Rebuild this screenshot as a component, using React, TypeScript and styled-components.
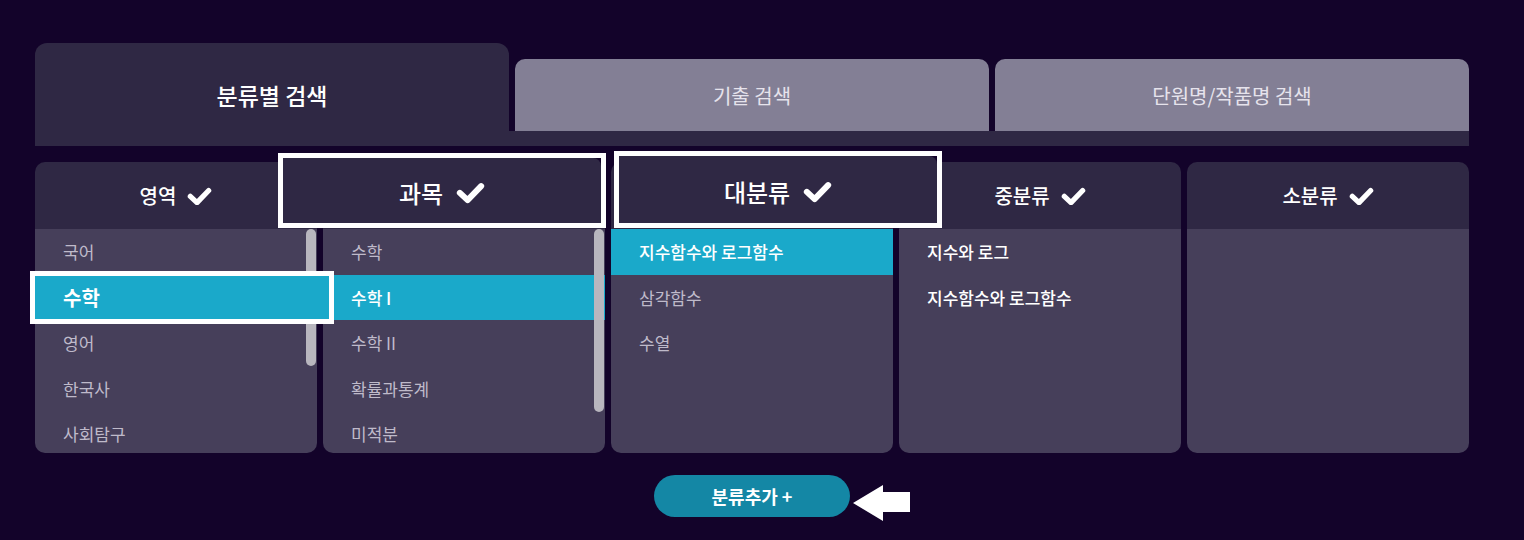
import styled, { createGlobalStyle } from "styled-components";

const colors = {
  bg: "#13032a",
  header: "#2f2844",
  list: "#463f5a",
  tabIdle: "#837f95",
  cyan: "#1aa9ca",
  button: "#1487a5",
  mute: "#bfbaca",
  white: "#ffffff",
};

interface ColumnData {
  title: string;
  items: string[];
  selected?: number;
  bright?: boolean;
  scroll?: { height: number };
}

const columns: ColumnData[] = [
  {
    title: "영역",
    items: ["국어", "수학", "영어", "한국사", "사회탐구"],
    scroll: { height: 137 },
  },
  {
    title: "과목",
    items: ["수학", "수학 I", "수학 II", "확률과통계", "미적분"],
    selected: 1,
    scroll: { height: 183 },
  },
  {
    title: "대분류",
    items: ["지수함수와 로그함수", "삼각함수", "수열"],
    selected: 0,
  },
  {
    title: "중분류",
    items: ["지수와 로그", "지수함수와 로그함수"],
    bright: true,
  },
  { title: "소분류", items: [] },
];

function Check({ size = 25 }: { size?: number }) {
  return (
    <CheckSvg width={size} height={size * 0.75} viewBox="0 0 24 18">
      <polyline
        points="3.2,9 9.6,15 20.8,3.4"
        fill="none"
        stroke="#fff"
        strokeWidth="5"
        strokeLinecap="round"
        strokeLinejoin="round"
      />
    </CheckSvg>
  );
}

export default function App() {
  return (
    <>
      <GlobalStyle />
      <Page>
        <TabRow>
          <Tab $active>분류별 검색</Tab>
          <Tab>기출 검색</Tab>
          <Tab>단원명/작품명 검색</Tab>
        </TabRow>

        <Board>
          {columns.map((col) => (
            <Column key={col.title}>
              <Header>
                <HeaderLabel>{col.title}</HeaderLabel>
                <Check />
              </Header>
              <List>
                {col.items.map((item, i) => (
                  <Row
                    key={item}
                    $selected={col.selected === i}
                    $bright={col.bright}
                  >
                    {item}
                  </Row>
                ))}
                {col.scroll && <ScrollThumb $height={col.scroll.height} />}
              </List>
            </Column>
          ))}

          <HeaderCallout $left={243} $top={-9} $height={75}>
            <CalloutInner>
              <CalloutLabel>과목</CalloutLabel>
              <Check size={29} />
            </CalloutInner>
          </HeaderCallout>
          <HeaderCallout $left={579} $top={-11} $height={77}>
            <CalloutInner>
              <CalloutLabel>대분류</CalloutLabel>
              <Check size={29} />
            </CalloutInner>
          </HeaderCallout>
          <RowCallout>수학</RowCallout>
        </Board>

        <Actions>
          <AddButton>
            분류추가 +
            <Pointer width="58" height="36" viewBox="0 0 58 36">
              <polygon points="0,18 30,0 30,7 57,7 57,27 30,27 30,36" fill="#fff" />
            </Pointer>
          </AddButton>
        </Actions>
      </Page>
    </>
  );
}

const GlobalStyle = createGlobalStyle`
  html, body {
    margin: 0;
    background: ${colors.bg};
    font-family: "Noto Sans CJK KR", "Noto Sans", sans-serif;
  }
`;

const Page = styled.div`
  width: 1434px;
  padding: 43px 35px 0;
  height: 497px;
`;

const TabRow = styled.div`
  display: flex;
  align-items: flex-end;
  gap: 6px;
  border-bottom: 15px solid ${colors.header};
`;

const Tab = styled.div<{ $active?: boolean }>`
  position: relative;
  z-index: 1;
  flex: 1;
  display: flex;
  align-items: center;
  justify-content: center;
  box-sizing: border-box;
  height: ${({ $active }) => ($active ? "103px" : "72px")};
  margin-bottom: ${({ $active }) => ($active ? "-15px" : "0")};
  border-radius: ${({ $active }) => ($active ? "12px 12px 0 0" : "10px 10px 0 0")};
  background: ${({ $active }) => ($active ? colors.header : colors.tabIdle)};
  color: ${({ $active }) => ($active ? colors.white : "#e6e3ec")};
  font-size: ${({ $active }) => ($active ? "23px" : "20px")};
  font-weight: ${({ $active }) => ($active ? 500 : 400)};
`;

const Board = styled.div`
  position: relative;
  margin-top: 16px;
  display: grid;
  grid-template-columns: repeat(5, 1fr);
  gap: 6px;
`;

const Column = styled.div`
  border-radius: 10px;
  overflow: hidden;
  display: flex;
  flex-direction: column;
`;

const Header = styled.div`
  height: 67px;
  background: ${colors.header};
  display: flex;
  align-items: center;
  justify-content: center;
  gap: 11px;
`;

const HeaderLabel = styled.span`
  color: ${colors.white};
  font-size: 20px;
  font-weight: 500;
`;

const CheckSvg = styled.svg`
  display: block;
  margin-top: 1px;
`;

const List = styled.div`
  position: relative;
  height: 224px;
  background: ${colors.list};
`;

const Row = styled.div<{ $selected?: boolean; $bright?: boolean }>`
  height: 45.5px;
  display: flex;
  align-items: center;
  padding-left: 28px;
  font-size: 17px;
  font-weight: ${({ $selected, $bright }) => ($selected || $bright ? 500 : 400)};
  color: ${({ $selected, $bright }) =>
    $selected || $bright ? colors.white : colors.mute};
  background: ${({ $selected }) => ($selected ? colors.cyan : "transparent")};
`;

const ScrollThumb = styled.div<{ $height: number }>`
  position: absolute;
  top: 0;
  right: 1px;
  width: 10px;
  height: ${({ $height }) => $height}px;
  border-radius: 5px;
  background: #b8b6be;
`;

const HeaderCallout = styled.div<{ $left: number; $top: number; $height: number }>`
  position: absolute;
  left: ${({ $left }) => $left}px;
  top: ${({ $top }) => $top}px;
  width: 328px;
  height: ${({ $height }) => $height}px;
  box-sizing: border-box;
  border: 5px solid ${colors.white};
  background: ${colors.bg};
  display: flex;
`;

const CalloutInner = styled.div`
  flex: 1;
  background: ${colors.header};
  border-radius: 0 8px 0 0;
  display: flex;
  align-items: center;
  justify-content: center;
  gap: 13px;
  padding-top: 4px;
`;

const CalloutLabel = styled.span`
  color: ${colors.white};
  font-size: 24px;
  font-weight: 500;
`;

const RowCallout = styled.div`
  position: absolute;
  left: -5px;
  top: 109px;
  width: 304px;
  height: 53px;
  box-sizing: border-box;
  border: 5px solid ${colors.white};
  background: ${colors.cyan};
  display: flex;
  align-items: center;
  padding-left: 28px;
  color: ${colors.white};
  font-size: 20px;
  font-weight: 700;
`;

const Actions = styled.div`
  display: flex;
  justify-content: center;
  margin-top: 22px;
`;

const AddButton = styled.button`
  position: relative;
  width: 196px;
  height: 42px;
  border: none;
  border-radius: 21px;
  background: ${colors.button};
  color: ${colors.white};
  font-family: "Noto Sans CJK KR", "Noto Sans", sans-serif;
  font-size: 18px;
  font-weight: 700;
  cursor: pointer;
`;

const Pointer = styled.svg`
  position: absolute;
  left: calc(100% + 3px);
  top: 10px;
`;
